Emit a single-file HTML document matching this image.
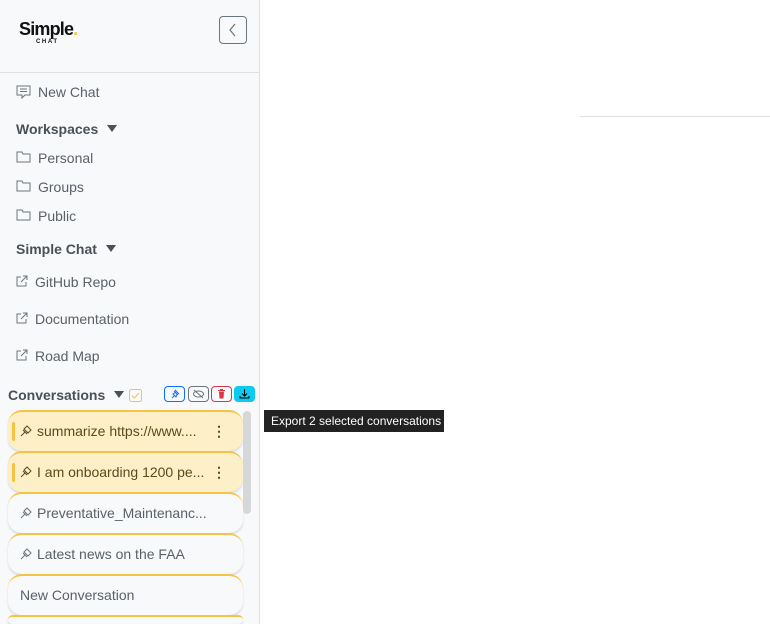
<!DOCTYPE html>
<html><head><style>
*{box-sizing:border-box;margin:0;padding:0}
html,body{width:770px;height:624px;overflow:hidden}
body{background:#fff;font-family:"Liberation Sans",sans-serif;font-size:14px;color:#5a6169;position:relative}
#sb{position:absolute;left:0;top:0;width:260px;height:624px;background:#f8f9fa;border-right:1px solid #dee2e6;overflow:hidden}
.a{position:absolute;white-space:nowrap}
.h{font-weight:bold;color:#495057;font-size:14px}
.tri{display:inline-block;width:0;height:0;border-left:5px solid transparent;border-right:5px solid transparent;border-top:7px solid #495057;margin-left:9px;vertical-align:2px}
.item{position:absolute;left:8px;width:235px;height:41px;border-radius:14px;border-top:2px solid #f6c344;box-shadow:0 2px 2px rgba(0,0,0,.12);background:#f8f9fa;font-size:14px;line-height:38px;padding-left:12px;color:#5a6169;overflow:hidden}
.sel{background:#fdf0c8;color:#5c4a1a}
.sel:before{content:"";position:absolute;left:4px;top:10px;width:3px;height:19px;background:#f6c344;border-radius:2px}
.dots{position:absolute;left:204px;top:0;font-weight:bold;color:#5c4a1a}
.btn{position:absolute;top:386px;width:21px;height:16px;border-radius:4px;border:1px solid}
.pin{vertical-align:-1px;margin-right:4px}
</style></head><body>
<div id="sb">
<div class="a" style="left:19px;top:19px;font-weight:bold;font-size:18px;color:#111;letter-spacing:-0.8px">Simple<span style="color:#f6c344">.</span></div>
<div class="a" style="left:36px;top:39px;font-weight:bold;font-size:6px;color:#111;letter-spacing:1.6px">CHAT</div>
<div class="a" style="left:219px;top:16px;width:28px;height:28px;border:1px solid #6c757d;border-radius:4px;text-align:center">
<svg width="10" height="14" viewBox="0 0 10 14" style="margin-top:6px"><path d="M7 1L2 7l5 6" stroke="#6c757d" fill="none" stroke-width="1.2"/></svg></div>
<div class="a" style="left:0;top:72px;width:260px;border-top:1px solid #dee2e6"></div>
<svg class="a" style="left:16px;top:85px" width="15" height="14" viewBox="0 0 15 14"><path d="M1 1h13v9H9l-3 3v-3H1z" fill="none" stroke="#6c757d"/><path d="M4 4h7M4 6.5h7" stroke="#6c757d"/></svg>
<div class="a" style="left:38px;top:84px">New Chat</div>
<div class="a h" style="left:16px;top:121px">Workspaces<span class="tri"></span></div>
<svg class="a" style="left:16px;top:151px" width="15" height="12" viewBox="0 0 15 12"><path d="M1 1h5l1 2h7v8H1z" fill="none" stroke="#6c757d"/></svg>
<div class="a" style="left:38px;top:150px">Personal</div>
<svg class="a" style="left:16px;top:180px" width="15" height="12" viewBox="0 0 15 12"><path d="M1 1h5l1 2h7v8H1z" fill="none" stroke="#6c757d"/></svg>
<div class="a" style="left:38px;top:179px">Groups</div>
<svg class="a" style="left:16px;top:209px" width="15" height="12" viewBox="0 0 15 12"><path d="M1 1h5l1 2h7v8H1z" fill="none" stroke="#6c757d"/></svg>
<div class="a" style="left:38px;top:208px">Public</div>
<div class="a h" style="left:16px;top:241px">Simple Chat<span class="tri"></span></div>
<svg class="a" style="left:16px;top:275px" width="12" height="12" viewBox="0 0 12 12"><path d="M5 2H1v9h9V7M7 1h4v4M11 1L5 7" fill="none" stroke="#6c757d"/></svg>
<div class="a" style="left:35px;top:274px">GitHub Repo</div>
<svg class="a" style="left:16px;top:312px" width="12" height="12" viewBox="0 0 12 12"><path d="M5 2H1v9h9V7M7 1h4v4M11 1L5 7" fill="none" stroke="#6c757d"/></svg>
<div class="a" style="left:35px;top:311px">Documentation</div>
<svg class="a" style="left:16px;top:349px" width="12" height="12" viewBox="0 0 12 12"><path d="M5 2H1v9h9V7M7 1h4v4M11 1L5 7" fill="none" stroke="#6c757d"/></svg>
<div class="a" style="left:35px;top:348px">Road Map</div>
<div class="a h" style="left:8px;top:387px">Conversations<span class="tri"></span></div>
<svg class="a" style="left:129px;top:389px" width="13" height="13" viewBox="0 0 13 13"><rect x=".5" y=".5" width="12" height="12" rx="2" fill="none" stroke="#f6c344"/><path d="M3 6.5l2.5 2.5L10 4" fill="none" stroke="#f6c344"/></svg>
<div class="btn" style="left:164px;border-color:#0d6efd"><svg width="19" height="14" viewBox="0 0 19 14"><path d="M7 11l3-3M9 4l4 4M10 3l4 4M11 5l-3 2 3 3 1-3" fill="none" stroke="#0d6efd"/></svg></div>
<div class="btn" style="left:188px;border-color:#6c757d"><svg width="19" height="14" viewBox="0 0 19 14"><ellipse cx="9.5" cy="7" rx="5" ry="3" fill="none" stroke="#6c757d"/><path d="M5 3l9 8" stroke="#6c757d"/></svg></div>
<div class="btn" style="left:211px;border-color:#dc3545"><svg width="19" height="14" viewBox="0 0 19 14"><path d="M6 3.5h7M8 2.5h3" stroke="#dc3545"/><path d="M7 4.5h5l-.5 7h-4z" fill="#dc3545"/></svg></div>
<div class="btn" style="left:234px;background:#0dcaf0;border-color:#0dcaf0"><svg width="19" height="14" viewBox="0 0 19 14"><path d="M9.5 2v7M7 6.5l2.5 2.5 2.5-2.5M5 9v2h9V9" fill="none" stroke="#000"/></svg></div>
<div class="item sel" style="top:410px"><svg class="pin" width="13" height="13" viewBox="0 0 13 13"><path d="M1 12l4-4M3 6l4 4M4 5l3-3 4 4-3 3z" fill="none" stroke="#5c4a1a"/></svg>summarize https://www....<span class="dots">⋮</span></div>
<div class="item sel" style="top:451px"><svg class="pin" width="13" height="13" viewBox="0 0 13 13"><path d="M1 12l4-4M3 6l4 4M4 5l3-3 4 4-3 3z" fill="none" stroke="#5c4a1a"/></svg>I am onboarding 1200 pe...<span class="dots">⋮</span></div>
<div class="item" style="top:492px"><svg class="pin" width="13" height="13" viewBox="0 0 13 13"><path d="M1 12l4-4M3 6l4 4M4 5l3-3 4 4-3 3z" fill="none" stroke="#6c757d"/></svg>Preventative_Maintenanc...</div>
<div class="item" style="top:533px"><svg class="pin" width="13" height="13" viewBox="0 0 13 13"><path d="M1 12l4-4M3 6l4 4M4 5l3-3 4 4-3 3z" fill="none" stroke="#6c757d"/></svg>Latest news on the FAA</div>
<div class="item" style="top:574px">New Conversation</div>
<div class="item" style="top:615px;height:9px"></div>
<div class="a" style="left:243px;top:411px;width:8px;height:103px;background:#d5d7d9;border-radius:4px"></div>
</div>
<div class="a" style="left:580px;top:116px;width:190px;border-top:1px solid #dee2e6"></div>
<div class="a" style="left:264px;top:410px;width:180px;height:22px;background:#222;color:#fff;font-size:12px;line-height:22px;padding-left:7px">Export 2 selected conversations</div>
</body></html>
